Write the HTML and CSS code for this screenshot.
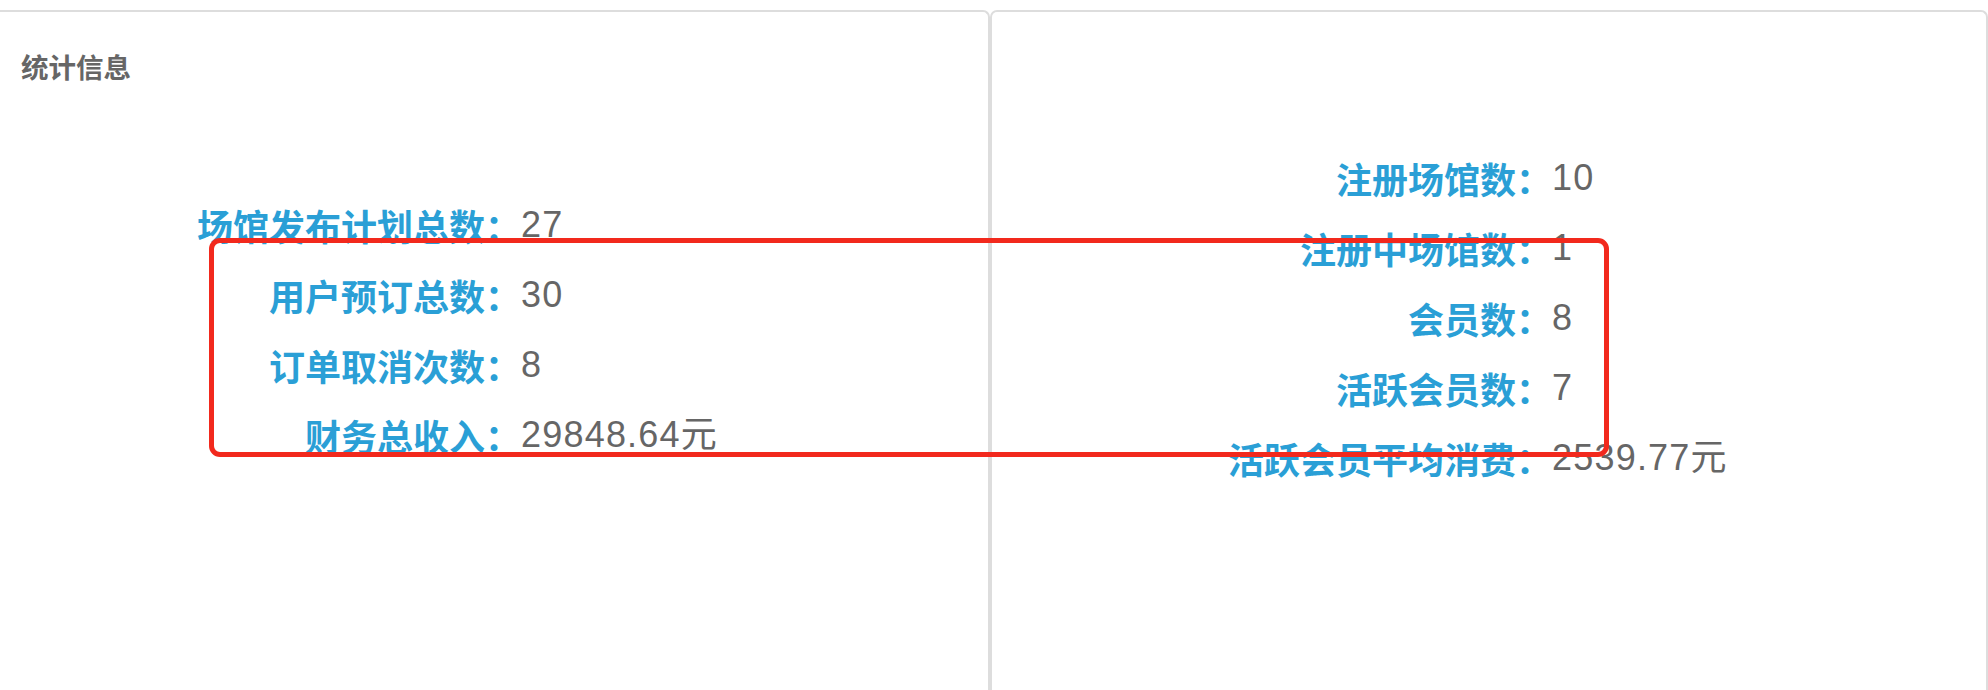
FILE: index.html
```html
<!DOCTYPE html>
<html lang="zh-CN">
<head>
<meta charset="utf-8">
<title>统计信息</title>
<link rel="stylesheet" href="styles.css">
</head>
<body>
<div class="panels">
  <section class="panel panel-left">
    <h3 class="panel-title">统计信息</h3>
    <div class="stats stats-left">
      <div class="stat"><span class="label">场馆发布计划总数：</span><span class="value">27</span></div>
      <div class="stat"><span class="label">用户预订总数：</span><span class="value">30</span></div>
      <div class="stat"><span class="label">订单取消次数：</span><span class="value">8</span></div>
      <div class="stat"><span class="label">财务总收入：</span><span class="value">29848.64元</span></div>
    </div>
  </section>
  <section class="panel panel-right">
    <div class="stats stats-right">
      <div class="stat"><span class="label">注册场馆数：</span><span class="value">10</span></div>
      <div class="stat"><span class="label">注册中场馆数：</span><span class="value">1</span></div>
      <div class="stat"><span class="label">会员数：</span><span class="value">8</span></div>
      <div class="stat"><span class="label">活跃会员数：</span><span class="value">7</span></div>
      <div class="stat"><span class="label">活跃会员平均消费：</span><span class="value">2539.77元</span></div>
    </div>
  </section>
</div>
<div class="highlight"></div>
</body>
</html>
```
FILE: styles.css
```css
html, body {
  margin: 0;
  padding: 0;
  background: #ffffff;
}

body {
  font-family: "Noto Sans CJK SC", "Noto Sans", sans-serif;
  overflow: hidden;
  height: 690px;
  position: relative;
}

.panels {
  display: flex;
  padding-top: 10px;
}

.panel {
  box-sizing: border-box;
  min-height: 760px;
  border-top: 2px solid #dddddd;
  background: #ffffff;
}

.panel-left {
  width: 990px;
  border-right: 2px solid #dddddd;
  border-top-right-radius: 7px;
}

.panel-right {
  width: 998px;
  border-left: 2px solid #dddddd;
  border-right: 2px solid #dddddd;
  border-top-left-radius: 7px;
  border-top-right-radius: 7px;
}

.panel-title {
  margin: 0;
  padding: 40px 0 0 21px;
  font-size: 27.5px;
  line-height: 28px;
  font-weight: 700;
  color: #666666;
}

.stats {
  display: flex;
  flex-direction: column;
}

.stats-left {
  padding-top: 110px;
}

.stats-right {
  padding-top: 131px;
}

.stat {
  display: flex;
  align-items: center;
  height: 70px;
  font-size: 36px;
  line-height: 70px;
  white-space: nowrap;
}

.stats-left .label {
  width: 521px;
}

.stats-right .label {
  width: 560px;
}

.label {
  flex: none;
  text-align: right;
  color: #2a9fd6;
  font-weight: 700;
}

.value {
  color: #666666;
  font-family: "Liberation Sans", "Noto Sans CJK SC", sans-serif;
  font-weight: 400;
  letter-spacing: 1.2px;
}

.highlight {
  position: absolute;
  left: 209px;
  top: 238px;
  width: 1400px;
  height: 219px;
  box-sizing: border-box;
  border: 5px solid #f2291d;
  border-radius: 11px;
  pointer-events: none;
}
```
